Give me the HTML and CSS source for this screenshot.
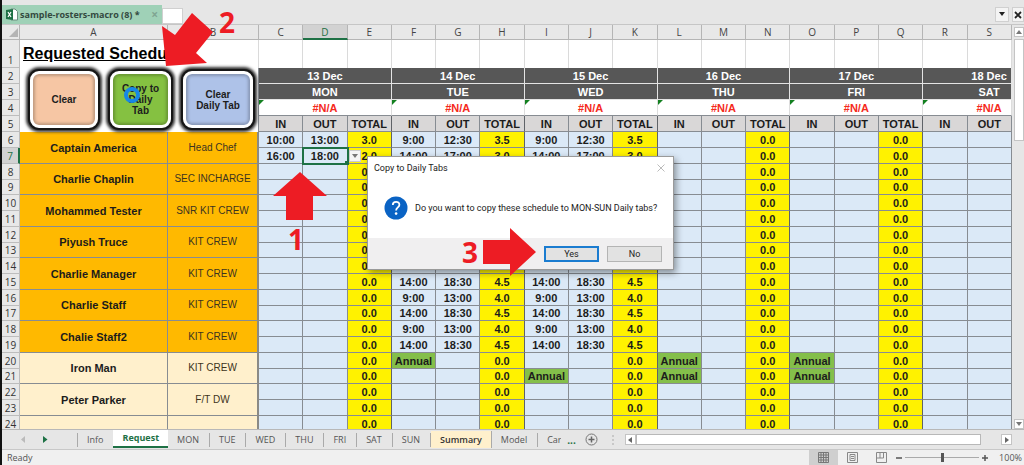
FILE: index.html
```html
<!DOCTYPE html>
<html lang="en">
<head>
<meta charset="utf-8">
<title>sample-rosters-macro (8)</title>
<link rel="stylesheet" href="styles.css">
</head>
<body>
<div class="app">
  <header class="docbar">
    <div class="doctab">
      <svg class="xl" width="12" height="13" viewBox="0 0 12 13"><path d="M5 1h4l2.500 2.500V12H5z" fill="#fff" stroke="#6d8f80"/><path d="M0 2l7-1v11l-7-1z" fill="#1e7145"/><path d="M2 4l3 5M5 4L2 9" stroke="#fff" stroke-width="1.200"/></svg>
      <span>sample-rosters-macro (8) *</span>
      <button class="doctab-close" aria-label="Close tab">×</button>
    </div>
    <button class="newtab" aria-label="New tab"></button>
    <div class="docbar-tools">
      <button aria-label="Tab list"><svg width="8" height="5" viewBox="0 0 8 5"><path d="M1 0h6L4 4z" fill="#222"/></svg></button>
      <button aria-label="Close"><svg width="8" height="8" viewBox="0 0 8 8"><path d="M1 1l6 6M7 1L1 7" stroke="#222" stroke-width="1.800"/></svg></button>
    </div>
  </header>

  <main class="work">
    <div class="pane">
      <table class="sheet">
        <colgroup><col class="c-num"><col class="c-name"><col class="c-role"><col span="17"></colgroup>
        <thead>
          <tr class="letters">
            <th class="corner"><svg width="9" height="9" viewBox="0 0 9 9"><path d="M9 0v9H0z" fill="#b4b4b4"/></svg></th>
            <th>A</th><th>B</th><th>C</th><th class="on">D</th><th>E</th><th>F</th><th>G</th><th>H</th><th>I</th><th>J</th><th>K</th><th>L</th><th>M</th><th>N</th><th>O</th><th>P</th><th>Q</th><th>R</th><th>S</th>
          </tr>
          <tr class="titlerow">
            <th class="num">1</th><td class="title" colspan="2"><span>Requested Schedule</span></td>
            <td></td><td></td><td></td><td></td><td></td><td></td><td></td><td></td><td></td><td></td><td></td><td></td><td></td><td></td><td></td><td></td><td></td>
          </tr>
          <tr class="dark">
            <th class="num">2</th><td class="blank" colspan="2" rowspan="4"></td>
            <td colspan="3">13 Dec</td><td colspan="3">14 Dec</td><td colspan="3">15 Dec</td><td colspan="3">16 Dec</td><td colspan="3">17 Dec</td><td colspan="2"><div class="cut">18 Dec</div></td>
          </tr>
          <tr class="dark">
            <th class="num">3</th>
            <td colspan="3">MON</td><td colspan="3">TUE</td><td colspan="3">WED</td><td colspan="3">THU</td><td colspan="3">FRI</td><td colspan="2"><div class="cut">SAT</div></td>
          </tr>
          <tr class="error">
            <th class="num">4</th>
            <td colspan="3">#N/A</td><td colspan="3">#N/A</td><td colspan="3">#N/A</td><td colspan="3">#N/A</td><td colspan="3">#N/A</td><td colspan="2"><div class="cut">#N/A</div></td>
          </tr>
          <tr class="inout">
            <th class="num">5</th>
            <td>IN</td><td>OUT</td><td class="end">TOTAL</td><td>IN</td><td>OUT</td><td class="end">TOTAL</td><td>IN</td><td>OUT</td><td class="end">TOTAL</td><td>IN</td><td>OUT</td><td class="end">TOTAL</td><td>IN</td><td>OUT</td><td class="end">TOTAL</td><td>IN</td><td>OUT</td>
          </tr>
        </thead>
        <tbody id="roster"></tbody>
      </table>
      <div class="macros">
        <button class="macro peach">Clear</button>
        <button class="macro green">Copy to Daily Tab</button>
        <button class="macro blue">Clear<br>Daily Tab</button>
      </div>
    </div>
    <div class="vscroll">
      <button aria-label="Scroll up"><svg width="6" height="4" viewBox="0 0 6 4"><path d="M0 4h6L3 0z" fill="#777"/></svg></button>
      <div class="vthumb"></div>
      <button class="last" aria-label="Scroll down"><svg width="6" height="4" viewBox="0 0 6 4"><path d="M0 0h6L3 4z" fill="#777"/></svg></button>
    </div>
  </main>

  <nav class="tabs">
    <div class="arrows">
      <button aria-label="Previous sheet"><svg width="5" height="7" viewBox="0 0 5 7"><path d="M4 0v7L0 3.500z" fill="#bbb"/></svg></button>
      <button aria-label="Next sheet"><svg width="5" height="7" viewBox="0 0 5 7"><path d="M0 0v7l4.500-3.500z" fill="#1e7145"/></svg></button>
    </div>
    <button class="tab">Info</button>
    <button class="tab active">Request</button>
    <button class="tab">MON</button>
    <button class="tab">TUE</button>
    <button class="tab">WED</button>
    <button class="tab">THU</button>
    <button class="tab">FRI</button>
    <button class="tab">SAT</button>
    <button class="tab">SUN</button>
    <button class="tab summary">Summary</button>
    <button class="tab">Model</button>
    <button class="tab clipped">Car</button>
    <button class="more" aria-label="More sheets">...</button>
    <button class="add" aria-label="New sheet"><svg width="13" height="13" viewBox="0 0 13 13"><circle cx="6.500" cy="6.500" r="5.500" fill="none" stroke="#777"/><path d="M6.500 3.500v6M3.500 6.500h6" stroke="#666" stroke-width="1.500"/></svg></button>
    <svg class="grip" width="2" height="10" viewBox="0 0 2 10"><path d="M1 0v10" stroke="#aaa" stroke-dasharray="2 2"/></svg>
    <div class="hscroll">
      <button aria-label="Scroll left"><svg width="4" height="6" viewBox="0 0 4 6"><path d="M4 0v6L0 3z" fill="#666"/></svg></button>
      <div class="hthumb"></div>
      <button class="last" aria-label="Scroll right"><svg width="4" height="6" viewBox="0 0 4 6"><path d="M0 0v6l4-3z" fill="#666"/></svg></button>
    </div>
  </nav>

  <footer class="status">
    <span>Ready</span>
    <div class="views">
      <button class="on" aria-label="Normal view"><svg width="11" height="11" viewBox="0 0 11 11"><path d="M.5.5h10v10H.5zM.5 3h10M.5 5.500h10M.5 8h10M3 .5v10M5.500.5v10M8 .5v10" fill="none" stroke="#777"/></svg></button>
      <button aria-label="Page layout"><svg width="11" height="11" viewBox="0 0 11 11"><path d="M.5.5h10v10H.5zM3 2.500h5v6H3zM4 4.500h3M4 6.500h3" fill="none" stroke="#888"/></svg></button>
      <button aria-label="Page break preview"><svg width="11" height="11" viewBox="0 0 11 11"><path d="M.5.5h10v10H.5zM.5 6h7V.5M4 .5V6" fill="none" stroke="#888"/></svg></button>
    </div>
    <div class="zoom">
      <button aria-label="Zoom out"><svg width="6" height="6" viewBox="0 0 6 6"><path d="M0 3h6" stroke="#555" stroke-width="1.500"/></svg></button>
      <input type="range" min="0" max="200" value="100" aria-label="Zoom">
      <button aria-label="Zoom in"><svg width="6" height="6" viewBox="0 0 6 6"><path d="M0 3h6M3 0v6" stroke="#555" stroke-width="1.500"/></svg></button>
      <span>100%</span>
    </div>
  </footer>

  <section class="dialog" role="dialog" aria-labelledby="dlg-title">
    <div class="dlg-head">
      <h2 id="dlg-title">Copy to Daily Tabs</h2>
      <button aria-label="Close dialog"><svg width="8" height="8" viewBox="0 0 8 8"><path d="M.5.5l7 7M7.500.5l-7 7" stroke="#bbb"/></svg></button>
    </div>
    <div class="dlg-body">
      <svg width="24" height="24" viewBox="0 0 24 24"><circle cx="12" cy="12" r="11.500" fill="#0a63c4"/><path d="M8.800 8.900c0-4 6.600-4 6.600-.2 0 2.600-3.300 2.700-3.300 5.700" fill="none" stroke="#fff" stroke-width="1.800"/><circle cx="12.100" cy="17.600" r="1.300" fill="#fff"/></svg>
      <p>Do you want to copy these schedule to MON-SUN Daily tabs?</p>
    </div>
    <div class="dlg-foot"><button class="yes">Yes</button><button>No</button></div>
  </section>

  <svg class="notes" width="1024" height="465" viewBox="0 0 1024 465">
    <circle cx="132" cy="95" r="6" fill="none" stroke="#1787e6" stroke-width="4"/>
    <g fill="#ed1c24">
      <path d="M192 13l21 19-17 21 11 10-41 3-4-40 13 9z"/>
      <path d="M300 172l27 24h-14v24h-27v-24h-13z"/>
      <path d="M483 240h27v-12l26 24-26 24v-12h-27z"/>
      <text x="288" y="250">1</text>
      <text x="219" y="33">2</text>
      <text x="462" y="263">3</text>
    </g>
  </svg>
</div>
<script src="script.js"></script>
</body>
</html>
```
FILE: styles.css
```css
* { box-sizing: border-box; }

body {
  margin: 0;
  font-family: "Open Sans", "Noto Sans", sans-serif;
  font-size: 9px;
  color: #444;
}

button {
  margin: 0;
  padding: 0;
  border: 0;
  background: none;
  color: inherit;
  font: inherit;
}

svg { display: block; }

.app {
  position: relative;
  display: flex;
  flex-direction: column;
  height: 100vh;
  overflow: hidden;
  border-left: 2px solid #111;
  background: #e6e6e6;
}

/* Document tab strip */
.docbar {
  display: flex;
  align-items: flex-end;
  height: 25px;
  flex: none;
  border-bottom: 1px solid #c6c6c6;
}

.doctab {
  display: flex;
  align-items: center;
  gap: 2px;
  width: 160px;
  height: 19px;
  padding-left: 4px;
  background: #9fd1b7;
  color: #33493f;
  font-weight: 700;
  white-space: nowrap;
}

.doctab-close { margin: 0 4px 0 auto; color: #7fa592; font-size: 12px; }

.newtab {
  width: 21px;
  height: 16px;
  border: 1px solid #d0d0d0;
  background: #fff;
}

.docbar-tools {
  display: flex;
  align-self: flex-start;
  gap: 3px;
  margin: 7px 0 0 auto;
}

.docbar-tools button {
  display: grid;
  place-items: center;
  width: 14px;
  height: 15px;
  border: 1px solid #d0d0d0;
  background: #f4f4f4;
}

.docbar-tools button:last-child { width: 12px; }

/* Worksheet */
.work { display: flex; flex: 1; min-height: 0; }

.pane {
  position: relative;
  flex: 1;
  min-width: 0;
  overflow: hidden;
}

.sheet {
  width: 100%;
  table-layout: fixed;
  border-collapse: separate;
  border-spacing: 0;
  font: bold 11px/14px "Liberation Sans", Arial, sans-serif;
  color: #1c1c1c;
  text-align: center;
  white-space: nowrap;
}

.c-num { width: 18px; }
.c-name { width: 148px; }
.c-role { width: 91px; }

.sheet td, .sheet th {
  height: 16px;
  padding: 0;
  border: solid #878c92;
  border-width: 0 1px 1px 0;
}

.sheet .letters th {
  height: 15px;
  border-color: #b5b5b5;
  background: #e8e8e8;
  color: #444;
  font: 10px/14px "Open Sans", sans-serif;
}

.sheet .letters .on {
  border-bottom: 2px solid #1e7145;
  background: #d2d2d2;
  color: #1e7145;
  line-height: 12px;
}

.corner svg { margin-left: 7px; }

.sheet .num {
  border-color: #bdbdbd;
  background: #e8e8e8;
  color: #333;
  font: 10px/14px "Open Sans", sans-serif;
}

.sheet .num.on {
  border-right: 2px solid #1e7145;
  background: #d2d2d2;
  color: #1e7145;
}

.sheet .titlerow td {
  height: 28px;
  border-color: #dadada;
  border-bottom: 0;
  background: #fff;
}

.sheet .titlerow .num { vertical-align: bottom; }

.sheet .titlerow .title {
  padding-left: 3px;
  color: #000;
  font-size: 16px;
  line-height: 20px;
  text-align: left;
  text-decoration: underline;
}

.sheet .dark td { border-color: #e4e4e4; background: #575757; color: #fff; }
.sheet .dark .blank { border-color: #878c92; border-bottom: 0; background: #fff; }

.cut { margin-left: 50%; }

.sheet .error td {
  background: linear-gradient(135deg, #138020 3px, #fff 4px);
  color: #f52a1c;
  border-right-color: #ddd;
}

.sheet .inout td { background: #d9d7d7; }

.sheet tbody td { background: #dbe9f7; }
.sheet tbody tr:nth-child(4n) td:not([rowspan]), .sheet tbody tr:nth-child(4n) th { height: 15px; line-height: 13px; }
.sheet tbody .total { background: #fff200; }
.sheet .end { border-right: 1px solid #5f6368; }
.sheet tbody .annual { background: #84bf4a; }
.sheet tbody .name { background: #ffb900; }
.sheet tbody .role {
  background: #ffb900;
  border-right: 2px solid #8a8a86;
  color: #3c3420;
  font-weight: normal;
  font-size: 10px;
}
.sheet tbody .pale { background: #fff0cc; }

.sheet tbody .picked {
  position: relative;
  outline: 2px solid #1e7145;
  outline-offset: -1px;
}

.sheet .picked::after {
  content: "";
  position: absolute;
  right: -2px;
  bottom: -2px;
  width: 4px;
  height: 4px;
  background: #1e7145;
}

.drop {
  position: absolute;
  left: 100%;
  top: 2px;
  z-index: 1;
  display: grid;
  place-items: center;
  width: 12px;
  height: 12px;
  margin-left: 2px;
  border: 1px solid #ccc;
  background: #f5f5f5;
}

/* Macro buttons float above the header cells */
.macros {
  position: absolute;
  left: 28px;
  top: 46px;
  display: flex;
  gap: 12px;
}

.macro {
  height: 57px;
  border: 3px solid #fff;
  border-radius: 9px;
  box-shadow: 0 0 0 2px #161616, 0 0 3px 4px #333, inset 0 0 3px 2px rgba(0, 0, 0, .22);
  color: #1d1d1d;
  font: bold 10px/11px "Liberation Sans", Arial, sans-serif;
}

.peach { width: 68px; background: #f6c6a4; }
.green { width: 61px; padding: 0 8px; background: #85c141; }
.blue { width: 70px; background: #aec2e8; }

/* Scroll bars */
.vscroll {
  display: flex;
  flex-direction: column;
  gap: 2px;
  width: 12px;
  padding: 2px 0 0 2px;
  flex: none;
}

.vscroll button, .hscroll button {
  display: grid;
  place-items: center;
  width: 10px;
  height: 10px;
  border: 1px solid #c4c4c4;
  background: #fff;
}

.vthumb { height: 102px; border: 1px solid #c4c4c4; background: #fff; }
.vscroll .last { margin-top: auto; }

.hscroll {
  display: flex;
  align-items: center;
  flex: 1;
  margin: 0 12px 0 11px;
}

.hscroll button { width: 11px; height: 11px; }
.hthumb { flex: 1; height: 11px; border: 1px solid #b8b8b8; background: #fff; }
.hscroll .last { margin-left: 20px; }

/* Sheet tabs */
.tabs {
  display: flex;
  align-items: center;
  height: 21px;
  flex: none;
  border-top: 1px solid #b8b8b8;
  border-bottom: 1px solid #c8c8c8;
}

.arrows {
  display: flex;
  gap: 17px;
  width: 76px;
  height: 14px;
  align-items: center;
  padding-left: 19px;
  flex: none;
  border-right: 1px solid #aaa;
}

.tab {
  height: 14px;
  padding: 0 10px 0 9px;
  flex: none;
  border-right: 1px solid #aaa;
  color: #555;
  line-height: 13px;
}

.tab:has(+ .active) { border-right: 0; }

.tab.active {
  align-self: flex-start;
  height: 18px;
  padding: 0 9px;
  border-right: 0;
  border-bottom: 2px solid #1e7145;
  background: #fff;
  color: #1e7145;
  font-weight: 700;
  line-height: 16px;
}

.tab.summary { height: 17px; padding: 0 9px; background: #fff0cc; color: #333; font-weight: 600; }
.tab.clipped { width: 23px; padding-right: 0; overflow: hidden; border-right: 0; }
.more { margin-left: 6px; color: #1e7145; font-weight: 700; font-size: 10px; }
.add { margin-left: 9px; }
.grip { margin-left: 14px; }

/* Status bar */
.status {
  display: flex;
  align-items: center;
  height: 15px;
  padding: 0 2px 0 5px;
  flex: none;
  background: #f0f0f0;
  color: #555;
}

.views { display: flex; margin-left: auto; }

.views button {
  display: grid;
  place-items: center;
  width: 29px;
  height: 15px;
}

.views .on { background: #cfcfcf; }

.zoom { display: flex; align-items: center; gap: 3px; }
.zoom span { margin-left: 8px; }

.zoom input {
  width: 74px;
  height: 9px;
  margin: 0;
  appearance: none;
  background: linear-gradient(#aaa, #aaa) center / 100% 1px no-repeat;
}

.zoom input::-webkit-slider-thumb {
  appearance: none;
  width: 3px;
  height: 9px;
  background: #555;
}

/* Message box */
.dialog {
  position: absolute;
  left: 365px;
  top: 156px;
  z-index: 2;
  width: 307px;
  border: 1px solid #9a9a9a;
  background: #fff;
  box-shadow: 2px 3px 7px rgba(0, 0, 0, .4);
  color: #222;
  font: 9px/12px Roboto, "Open Sans", sans-serif;
}

.dlg-head {
  display: flex;
  align-items: center;
  justify-content: space-between;
  height: 21px;
  padding: 0 8px 0 6px;
}

.dlg-head h2 { margin: 0; font-size: 9px; font-weight: 400; }

.dlg-body {
  display: flex;
  align-items: center;
  gap: 7px;
  height: 60px;
  padding-left: 16px;
}

.dlg-body p { margin: 0; white-space: nowrap; }

.dlg-foot {
  display: flex;
  align-items: center;
  justify-content: flex-end;
  gap: 8px;
  height: 31px;
  padding-right: 11px;
  background: #f0eff0;
}

.dlg-foot button {
  width: 55px;
  height: 16px;
  border: 1px solid #b4b4b4;
  background: #e2e2e2;
}

.dlg-foot .yes { border: 2px solid #1b7cd0; }

/* Step markers */
.notes {
  position: absolute;
  left: -2px;
  top: 0;
  z-index: 3;
  pointer-events: none;
  font: bold 28px "Open Sans", sans-serif;
}
```
FILE: script.js
```js
const staff = [
  ["Captain America", "Head Chef"],
  ["Charlie Chaplin", "SEC INCHARGE"],
  ["Mohammed Tester", "SNR KIT CREW"],
  ["Piyush Truce", "KIT CREW"],
  ["Charlie Manager", "KIT CREW"],
  ["Charlie Staff", "KIT CREW"],
  ["Chalie Staff2", "KIT CREW"],
  ["Iron Man", "KIT CREW"],
  ["Peter Parker", "F/T DW"],
  ["", ""]
];
const off = ["", "", "0.0"];
const leave = ["Annual", "", "0.0"];

// Shift of one sheet row on one day: [in, out, total]
function shift(row, day) {
  if (day === 0) {
    return { 6: ["10:00", "13:00", "3.0"], 7: ["16:00", "18:00", "2.0"] }[row] || off;
  }
  if (day === 1 || day === 2) {
    if (row === 6) return ["9:00", "12:30", "3.5"];
    if (row === 7) return ["14:00", "17:00", "3.0"];
    if (row < 14) return ["", "", ""];
    if (row < 20) return row % 2 ? ["14:00", "18:30", "4.5"] : ["9:00", "13:00", "4.0"];
    return row === 19 + day ? leave : off;
  }
  if (day < 5 && (row === 20 || row === 21)) return leave;
  return day < 5 ? off : ["", ""];
}

const drop = '<button class="drop" aria-label="Choose time"><svg width="6" height="4" viewBox="0 0 6 4"><path d="M0 0h6L3 4z" fill="#777"/></svg></button>';
let html = "";
for (let row = 6; row <= 24; row++) {
  html += `<tr><th class="num${row === 7 ? " on" : ""}">${row}</th>`;
  if (row % 2 === 0) {
    const [name, role] = staff[(row - 6) / 2];
    const pale = row >= 20 ? " pale" : "";
    const span = row < 24 ? ' rowspan="2"' : "";
    html += `<td class="name${pale}"${span}>${name}</td><td class="role${pale}"${span}>${role}</td>`;
  }
  for (let day = 0; day < 6; day++) {
    shift(row, day).forEach((text, i) => {
      const picked = row === 7 && day === 0 && i === 1;
      const cls = i === 2 ? "total end" : text === "Annual" ? "annual" : picked ? "picked" : "";
      html += `<td class="${cls}">${text}${picked ? drop : ""}</td>`;
    });
  }
  html += "</tr>";
}
document.getElementById("roster").innerHTML = html;
```
